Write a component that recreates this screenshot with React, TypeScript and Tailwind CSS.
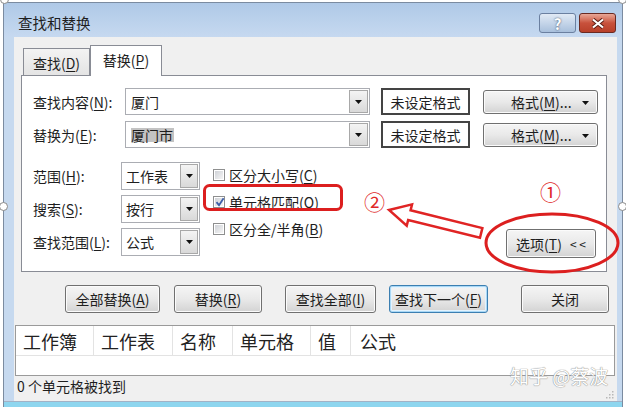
import React from "react";

const Caret = () => (
	<svg width="7" height="4" viewBox="0 0 7 4">
		<path d="M0 0H7L3.5 4Z" fill="#111" />
	</svg>
);

const Key = ({ k }: { k: string }) => (
	<>
		(<span className="underline underline-offset-[2px]">{k}</span>)
	</>
);

const DropBtn = ({ className }: { className: string }) => (
	<div
		className={`flex items-center justify-center border border-[#a8a8a8] bg-linear-to-b from-[#f4f4f4] to-[#d9d9d9] ${className}`}
	>
		<Caret />
	</div>
);

const Btn = ({
	className,
	children,
}: {
	className: string;
	children: React.ReactNode;
}) => (
	<div
		className={`flex items-center justify-center rounded-[3px] border border-[#707070] bg-linear-to-b from-[#f5f5f5] via-[#e9e9e9] to-[#d3d3d3] text-[14px] leading-none shadow-[inset_0_0_0_1px_#fbfbfb] ${className}`}
	>
		{children}
	</div>
);

const Check = ({ checked }: { checked?: boolean }) => (
	<span className="relative flex h-[12px] w-[12px] items-center justify-center border border-[#8e8f8f] bg-white p-[1px]">
		<span className="h-full w-full bg-linear-to-br from-[#cfd2d7] to-[#f5f5f5]" />
		{checked && (
			<svg
				width="10"
				height="10"
				viewBox="0 0 10 10"
				className="absolute left-[1px] top-[0px]"
			>
				<path
					d="M1.5 5.2L4 8.2L8.6 1.2"
					fill="none"
					stroke="#3d5ea8"
					strokeWidth="1.8"
				/>
			</svg>
		)}
	</span>
);

const Handle = ({ className }: { className: string }) => (
	<span
		className={`absolute h-[9px] w-[9px] rounded-full border border-[#8a8a8a] bg-white ${className}`}
	/>
);

export default function App() {
	return (
		<div className="relative h-[407px] w-[626px] overflow-hidden bg-white pl-[3px] pt-[2px] font-['Noto_Sans_CJK_SC',sans-serif] text-[#1e1e1e]">
			{/* window */}
			<div className="flex h-[405px] w-[620px] flex-col border-x border-t border-[#7b8ba0] bg-[#c3d7ee]">
				{/* title bar */}
				<div className="flex h-[34px] shrink-0 bg-linear-to-b from-[#afc9e7] to-[#c6d9f0]">
					<span className="ml-[14px] mt-[13px] text-[14.5px] leading-none">
						查找和替换
					</span>
					<div className="ml-auto mr-[6px] mt-[10px] flex gap-[3px]">
						<div className="flex h-[20px] w-[37px] items-center justify-center rounded-[3px] border border-[#6b80a0] bg-linear-to-b from-[#e1eaf5] to-[#a9c0dc] text-[15px] font-bold leading-none text-white [text-shadow:0_0_2px_#2f3f58]">
							?
						</div>
						<div className="flex h-[20px] w-[37px] items-center justify-center rounded-[3px] border border-[#6a2a22] bg-linear-to-b from-[#e8a797] via-[#c8513c] to-[#b8402a]">
							<svg width="14" height="11" viewBox="0 0 14 11">
								<path
									d="M2 1.5L12 9.5M12 1.5L2 9.5"
									stroke="#5a1d15"
									strokeWidth="4"
								/>
								<path
									d="M2 1.5L12 9.5M12 1.5L2 9.5"
									stroke="#fff"
									strokeWidth="2.2"
								/>
							</svg>
						</div>
					</div>
				</div>

				<div className="flex h-[364px] shrink-0">
					<div className="w-[10px] bg-[#c6d9ef]" />

					{/* client */}
					<div className="flex w-[603px] flex-col bg-[#f0f0f0] pt-[8px]">
						{/* tabs */}
						<div className="relative z-10 -mb-[1px] flex h-[31px] items-end pl-[9px]">
							<div className="mb-[1px] flex h-[27px] w-[67px] items-center justify-center border-x border-t border-[#898c95] bg-linear-to-b from-[#f3f3f3] to-[#e4e4e4] pt-[2px] text-[14px] leading-none">
								查找<Key k="D" />
							</div>
							<div className="flex h-[31px] w-[72px] items-center justify-center border-x border-t border-[#898c95] bg-white pb-[3px] text-[14px] leading-none">
								替换<Key k="P" />
							</div>
						</div>

						{/* panel */}
						<div className="ml-[7px] flex h-[197px] w-[586px] flex-col border border-[#898c95] bg-white pl-[11px] pt-[12px] text-[14px] leading-none">
							<div className="flex h-[27px] items-center">
								<span className="w-[92px]">
									查找内容<Key k="N" />:
								</span>
								<div className="flex h-[27px] w-[245px] border border-[#abadb3] bg-white">
									<span className="flex flex-1 items-center pl-[5px]">厦门</span>
									<DropBtn className="my-[1px] mr-[1px] w-[19px]" />
								</div>
								<div className="ml-[11px] flex h-[27px] w-[89px] items-center justify-center border-2 border-[#444]">
									未设定格式
								</div>
								<Btn className="relative ml-[13px] h-[24px] w-[115px] !justify-start pl-[27px]">
									格式<Key k="M" />...
									<span className="absolute right-[8px] top-[10px] flex">
										<Caret />
									</span>
								</Btn>
							</div>

							<div className="mt-[6px] flex h-[27px] items-center">
								<span className="w-[92px]">
									替换为<Key k="E" />:
								</span>
								<div className="flex h-[27px] w-[245px] border border-[#abadb3] bg-white">
									<span className="flex flex-1 items-center pl-[5px]">
										<span className="bg-[#c3c3c3] pr-[1px]">厦门市</span>
									</span>
									<DropBtn className="my-[1px] mr-[1px] w-[19px]" />
								</div>
								<div className="ml-[11px] flex h-[27px] w-[89px] items-center justify-center border-2 border-[#444]">
									未设定格式
								</div>
								<Btn className="relative ml-[13px] h-[24px] w-[115px] !justify-start pl-[27px]">
									格式<Key k="M" />...
									<span className="absolute right-[8px] top-[10px] flex">
										<Caret />
									</span>
								</Btn>
							</div>

							<div className="mt-[14px] flex">
								<div className="flex flex-col gap-[5px]">
									{[
										["范围", "H", "工作表"],
										["搜索", "S", "按行"],
										["查找范围", "L", "公式"],
									].map(([label, k, value]) => (
										<div key={k} className="flex h-[28px] items-center">
											<span className="w-[88px]">
												{label}
												<Key k={k} />:
											</span>
											<div className="flex h-[28px] w-[79px] border border-[#abadb3] bg-white">
												<span className="flex flex-1 items-center pl-[4px]">
													{value}
												</span>
												<DropBtn className="my-[1px] mr-[1px] w-[18px]" />
											</div>
										</div>
									))}
								</div>

								<div className="-mt-[1px] ml-[13px] flex flex-col">
									{[
										["区分大小写", "C", false],
										["单元格匹配", "O", true],
										["区分全/半角", "B", false],
									].map(([label, k, checked]) => (
										<div key={k as string} className="flex h-[27px] items-center gap-[4px]">
											<Check checked={checked as boolean} />
											<span>
												{label as string}
												<Key k={k as string} />
											</span>
										</div>
									))}
								</div>

								<Btn className="ml-auto mr-[10px] mt-[67px] h-[29px] w-[90px]">
									选项<Key k="T" />
									<span className="ml-[8px] text-[12px]">&lt; &lt;</span>
								</Btn>
							</div>
						</div>

						{/* action buttons */}
						<div className="mt-[13px] flex h-[28px]">
							<Btn className="ml-[51px] w-[95px]">
								全部替换<Key k="A" />
							</Btn>
							<Btn className="ml-[14px] w-[88px]">
								替换<Key k="R" />
							</Btn>
							<Btn className="ml-[23px] w-[91px]">
								查找全部<Key k="I" />
							</Btn>
							<Btn className="ml-[13px] w-[99px] !border-[#3c7fb1] !shadow-[inset_0_0_0_1px_#a9d8f6,inset_0_0_0_2px_#e4f3fd]">
								查找下一个<Key k="F" />
							</Btn>
							<Btn className="ml-[33px] w-[88px]">关闭</Btn>
						</div>

						{/* results list */}
						<div className="ml-[1px] mt-[12px] flex h-[51px] w-[600px] flex-col border border-[#9a9a9a] bg-white">
							<div className="flex h-[30px] border-b border-[#e3e3e3] text-[18px] leading-none text-[#222]">
								{[
									["工作簿", "w-[78px]"],
									["工作表", "w-[79px]"],
									["名称", "w-[60px]"],
									["单元格", "w-[78px]"],
									["值", "w-[40px]"],
								].map(([t, w]) => (
									<span
										key={t}
										className={`flex items-center border-r border-[#e3e3e3] pl-[7px] ${w}`}
									>
										{t}
									</span>
								))}
								<span className="flex items-center pl-[9px]">公式</span>
							</div>
						</div>

						{/* status bar */}
						<div className="relative flex h-[25px] items-start pl-[3px] pt-[3px] text-[14px] leading-none">
							0 个单元格被找到
							<svg
								width="10"
								height="10"
								viewBox="0 0 10 10"
								className="absolute bottom-[2px] right-[3px]"
							>
								{[
									[8, 2],
									[5, 5],
									[8, 5],
									[2, 8],
									[5, 8],
									[8, 8],
								].map(([x, y]) => (
									<rect key={`${x}-${y}`} x={x} y={y} width="1.5" height="1.5" fill="#b8b8b8" />
								))}
							</svg>
						</div>
					</div>

					<div className="w-[5px] bg-[#c6d9ef]" />
				</div>

				<div className="h-[6px] border-t border-[#a2b2c6] bg-[#8ed6ef]" />
			</div>

			{/* annotations */}
			<svg
				width="626"
				height="407"
				className="pointer-events-none absolute left-0 top-0"
			>
				<rect
					x="204.5"
					y="185.5"
					width="137"
					height="24"
					rx="5"
					fill="none"
					stroke="#dc1f1f"
					strokeWidth="3"
				/>
				<ellipse
					cx="552"
					cy="243"
					rx="66"
					ry="29"
					fill="none"
					stroke="#dc1f1f"
					strokeWidth="3"
				/>
				<g transform="translate(389 210) rotate(14)">
					<path
						d="M0 0L21 -11L21 -5L95 -5L95 5L21 5L21 11Z"
						fill="none"
						stroke="#e02424"
						strokeWidth="2.5"
					/>
				</g>
			</svg>
			<span className="absolute left-[364px] top-[191px] text-[21px] leading-none text-[#e02828]">
				②
			</span>
			<span className="absolute left-[540px] top-[181px] text-[21px] leading-none text-[#e02828]">
				①
			</span>

			{/* watermark */}
			<span className="absolute left-[510px] top-[366px] text-[19px] leading-none text-white [text-shadow:0_0_1px_#8a8a8a,0_0_1px_#8a8a8a]">
				知乎 @蔡波
			</span>

			{/* selection handles */}
			<Handle className="-top-[5px] left-[0px]" />
			<Handle className="left-[-1px] top-[202px]" />
			<Handle className="-top-[5px] left-[618px]" />
			<Handle className="left-[618px] top-[202px]" />
		</div>
	);
}
